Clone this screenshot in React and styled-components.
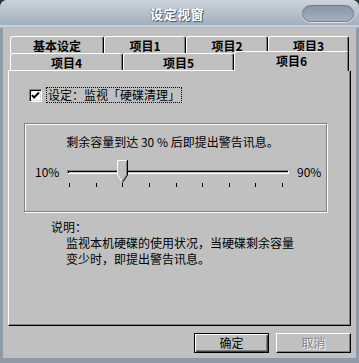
import React from "react";
import styled, { createGlobalStyle } from "styled-components";

const GlobalStyle = createGlobalStyle`
  html, body {
    margin: 0;
    padding: 0;
    background: #2c3530;
  }
  * {
    box-sizing: border-box;
  }
`;

const FONT = `"Noto Sans CJK SC", "Liberation Sans", sans-serif`;

const Window = styled.div`
  width: 359px;
  height: 363px;
  display: flex;
  flex-direction: column;
  background: #8e9aa8;
  border-radius: 7px 7px 0 0;
  overflow: hidden;
  font-family: ${FONT};
  font-size: 12px;
  color: #000;
`;

const TitleBar = styled.div`
  height: 28px;
  display: grid;
  grid-template-columns: 1fr auto 1fr;
  align-items: center;
  padding: 0 5px 2px 0;
  background: linear-gradient(#cbd3dc, #a3b0be 88%, #cfd6de 90%, #b2bcc7 100%);
`;

const Title = styled.div`
  grid-column: 2;
  font-size: 13px;
  font-weight: bold;
  color: #fff;
  letter-spacing: 0.5px;
  text-shadow: 1px 1px 0 #4d5966, -1px 0 0 #7d8a98;
`;

const Pill = styled.div`
  grid-column: 3;
  justify-self: end;
  width: 52px;
  height: 17px;
  border-radius: 9px;
  border: 1px solid #6f7c8b;
  background: linear-gradient(#8795a5, #a5b1be);
  box-shadow: 0 1px 0 #dfe5eb;
`;

const Body = styled.div`
  flex: 1;
  margin: 0 3px 5px 3px;
  padding: 8px 5px 5px 5px;
  background: #c0c0c0;
  display: flex;
  flex-direction: column;
`;

const TabRow = styled.div`
  display: flex;
  height: 17px;
  margin: 0 2px;
  align-items: flex-end;
`;

const Tab = styled.div`
  width: ${(p) => p.$w}px;
  height: ${(p) => (p.$active ? 20 : 17)}px;
  margin-top: ${(p) => (p.$active ? -3 : 0)}px;
  margin-bottom: ${(p) => (p.$active ? -1 : 0)}px;
  position: ${(p) => (p.$active ? "relative" : "static")};
  z-index: ${(p) => (p.$active ? 2 : 0)};
  display: flex;
  justify-content: center;
  align-items: ${(p) => (p.$active ? "flex-start" : "center")};
  padding-top: ${(p) => (p.$active ? 1 : 0)}px;
  background: #c0c0c0;
  border-top: 1px solid #fff;
  border-left: 1px solid #fff;
  border-right: 1px solid #000;
  box-shadow: inset -1px 0 0 #808080;
  border-radius: 3px 3px 0 0;
  font-weight: bold;
  font-size: 12px;
  line-height: 15px;
`;

const Panel = styled.div`
  height: 256px;
  display: flex;
  flex-direction: column;
  background: #c0c0c0;
  border-top: 1px solid #fff;
  border-left: 1px solid #fff;
  border-right: 1px solid #000;
  border-bottom: 1px solid #000;
  box-shadow: inset -1px -1px 0 #808080;
  padding: 16px 23px 0 15px;
`;

const CheckRow = styled.div`
  display: flex;
  align-items: center;
  gap: 4px;
  margin-left: 5px;
  height: 16px;
`;

const CheckBox = styled.div`
  width: 13px;
  height: 13px;
  background: #fff;
  border-top: 1px solid #808080;
  border-left: 1px solid #808080;
  border-right: 1px solid #fff;
  border-bottom: 1px solid #fff;
  box-shadow: inset 1px 1px 0 #000, inset -1px -1px 0 #dfdfdf;
  display: flex;
  align-items: center;
  justify-content: center;
`;

const FocusLabel = styled.span`
  border: 1px dotted #000;
  padding: 0 1px;
  line-height: 14px;
  height: 16px;
`;

const GroupBox = styled.div`
  margin-top: 20px;
  height: 89px;
  border: 1px solid #808080;
  box-shadow: inset 1px 1px 0 #fff, 1px 1px 0 #fff;
  display: flex;
  flex-direction: column;
  align-items: stretch;
  padding-top: 10px;
`;

const GroupText = styled.div`
  text-align: center;
  line-height: 16px;
  padding-right: 6px;
`;

const SliderRow = styled.div`
  display: flex;
  align-items: flex-start;
  padding-left: 10px;
  margin-top: 10px;
`;

const RangeLabel = styled.span`
  width: ${(p) => p.$w}px;
  line-height: 16px;
  margin-top: 4px;
`;

const SliderBody = styled.div`
  width: 222px;
  display: flex;
  flex-direction: column;
  position: relative;
  margin-right: 8px;
`;

const Track = styled.div`
  margin-top: 10px;
  height: 4px;
  border-top: 1px solid #808080;
  border-left: 1px solid #808080;
  border-bottom: 1px solid #fff;
  border-right: 1px solid #fff;
  box-shadow: inset 0 1px 0 #000, inset 1px 0 0 #000;
`;

const Ticks = styled.div`
  display: flex;
  justify-content: space-between;
  width: 214px;
  margin: 9px 0 0 2px;
`;

const Tick = styled.span`
  width: 1px;
  height: 4px;
  background: #000;
`;

const Thumb = styled.svg`
  position: absolute;
  top: 0;
  transform: translateX(-5px);
`;

const Note = styled.div`
  margin: 7px 0 0 27px;
  display: flex;
  flex-direction: column;
  font-size: 12px;
`;

const NoteTitle = styled.div`
  line-height: 16px;
  height: 16px;
`;

const NoteText = styled.div`
  padding-left: 15px;
  line-height: 16px;
  height: 16px;
  white-space: nowrap;
`;

const ButtonRow = styled.div`
  display: flex;
  justify-content: flex-end;
  gap: 7px;
  margin-top: 7px;
`;

const Button = styled.button`
  width: 75px;
  height: 20px;
  padding: 0;
  font-family: ${FONT};
  font-size: 12px;
  line-height: 16px;
  background: #c0c0c0;
  color: ${(p) => (p.disabled ? "#808080" : "#000")};
  text-shadow: ${(p) => (p.disabled ? "1px 1px 0 #fff" : "none")};
  border: 1px solid ${(p) => (p.$default ? "#000" : "transparent")};
  border-top-color: ${(p) => (p.$default ? "#000" : "#fff")};
  border-left-color: ${(p) => (p.$default ? "#000" : "#fff")};
  border-right-color: #000;
  border-bottom-color: #000;
  box-shadow: ${(p) =>
    p.$default
      ? "inset 1px 1px 0 #fff, inset -1px -1px 0 #404040, inset -2px -2px 0 #808080"
      : "inset -1px -1px 0 #808080"};
`;

const topTabs = [
  { label: "基本设定", w: 94 },
  { label: "项目1", w: 82 },
  { label: "项目2", w: 82 },
  { label: "项目3", w: 81 },
];

const bottomTabs = [
  { label: "项目4", w: 113 },
  { label: "项目5", w: 111 },
  { label: "项目6", w: 115, active: true },
];

export default function App() {
  const min = 10;
  const max = 90;
  const value = 30;
  const thumbLeft = 2 + ((value - min) / (max - min)) * 213;

  return (
    <>
      <GlobalStyle />
      <Window>
        <TitleBar>
          <Title>设定视窗</Title>
          <Pill />
        </TitleBar>
        <Body>
          <TabRow>
            {topTabs.map((t) => (
              <Tab key={t.label} $w={t.w}>
                {t.label}
              </Tab>
            ))}
          </TabRow>
          <TabRow>
            {bottomTabs.map((t) => (
              <Tab key={t.label} $w={t.w} $active={t.active}>
                {t.label}
              </Tab>
            ))}
          </TabRow>
          <Panel>
            <CheckRow>
              <CheckBox>
                <svg width="9" height="9" viewBox="0 0 9 9">
                  <polyline
                    points="1,4 3,6.5 8,1.5"
                    fill="none"
                    stroke="#000"
                    strokeWidth="2"
                  />
                </svg>
              </CheckBox>
              <FocusLabel>设定：监视「硬碟清理」</FocusLabel>
            </CheckRow>
            <GroupBox>
              <GroupText>剩余容量到达 30 % 后即提出警告讯息。</GroupText>
              <SliderRow>
                <RangeLabel $w={32}>10%</RangeLabel>
                <SliderBody>
                  <Track />
                  <Ticks>
                    {Array.from({ length: 9 }).map((_, i) => (
                      <Tick key={i} />
                    ))}
                  </Ticks>
                  <Thumb
                    width="11"
                    height="23"
                    viewBox="0 0 11 23"
                    style={{ left: thumbLeft }}
                  >
                    <polygon points="0,0 10,0 10,15 5,22 0,15" fill="#c0c0c0" />
                    <polyline points="0.5,15 0.5,0.5 10,0.5" fill="none" stroke="#fff" />
                    <polyline points="0.5,15 5,21.5" fill="none" stroke="#fff" />
                    <polyline points="10.5,0 10.5,15 5.5,22.5" fill="none" stroke="#000" />
                    <polyline points="9.5,1 9.5,15 5,21" fill="none" stroke="#808080" />
                  </Thumb>
                </SliderBody>
                <RangeLabel $w={24}>90%</RangeLabel>
              </SliderRow>
            </GroupBox>
            <Note>
              <NoteTitle>说明：</NoteTitle>
              <NoteText>监视本机硬碟的使用状况，当硬碟剩余容量</NoteText>
              <NoteText>变少时，即提出警告讯息。</NoteText>
            </Note>
          </Panel>
          <ButtonRow>
            <Button $default>确定</Button>
            <Button disabled>取消</Button>
          </ButtonRow>
        </Body>
      </Window>
    </>
  );
}
